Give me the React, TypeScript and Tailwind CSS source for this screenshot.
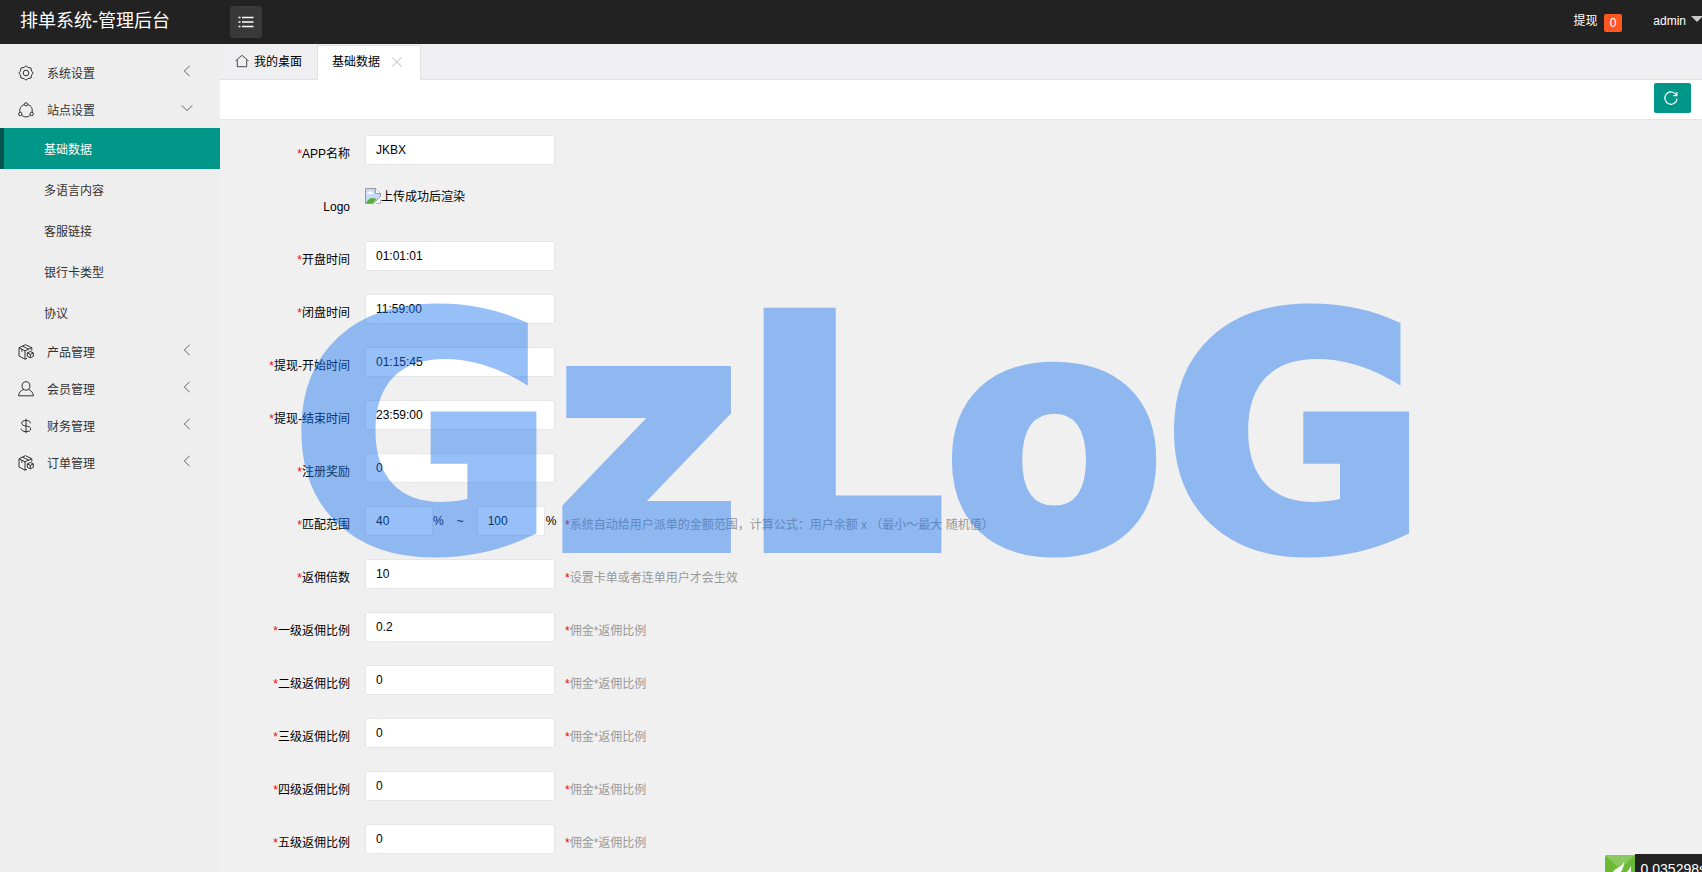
import React from 'react';

type IconProps = { className?: string };

const Svg = ({ className, children }: { className?: string; children: React.ReactNode }) => (
  <svg
    viewBox="0 0 16 16"
    fill="none"
    stroke="currentColor"
    strokeWidth={1}
    className={className}
    aria-hidden="true"
  >
    {children}
  </svg>
);

const GearIcon = ({ className }: IconProps) => (
  <Svg className={className}>
    <path d="M6.4 2.1Q8-.4 9.6 2.1L11 2.7Q13.9 2.1 13.3 5L13.9 6.4Q16.4 8 13.9 9.6L13.3 11Q13.9 13.9 11 13.3L9.6 13.9Q8 16.4 6.4 13.9L5 13.3Q2.1 13.9 2.7 11L2.1 9.6Q-.4 8 2.1 6.4L2.7 5Q2.1 2.1 5 2.7Z" strokeLinejoin="round" />
    <circle cx="8" cy="8" r="2.8" />
  </Svg>
);

const ShareIcon = ({ className }: IconProps) => (
  <Svg className={className}>
    <circle cx="8" cy="2.3" r="1.6" />
    <circle cx="2.3" cy="12" r="1.7" />
    <circle cx="13.7" cy="12" r="1.7" />
    <path d="M6.3 2.6C2.6 3.6 1.1 7 2 10.3M9.7 2.6c3.7 1 5.2 4.4 4.3 7.7M3.7 13.2c2.4 2.3 6.2 2.3 8.6 0" />
  </Svg>
);

const BoxIcon = ({ className }: IconProps) => (
  <Svg className={className}>
    <path d="M9 14.3l-2 .9L1 12V3.7L7.5.7l6.3 3v3M1 3.7l6 3.1 6.8-3.1M7 6.8v8.4M3.8 5.3v2.5M4.5 2.2l6.3 3" strokeLinejoin="round" />
    <path d="M12.3 7.5l3 1.4v3.4l-3 1.5-3-1.5V8.9zM9.3 8.9l3 1.5 3-1.5M12.3 10.4v3.4" strokeLinejoin="round" />
  </Svg>
);

const UserIcon = ({ className }: IconProps) => (
  <Svg className={className}>
    <ellipse cx="8" cy="4.9" rx="3.9" ry="4.2" />
    <path d="M5.7 8.4C2.7 9.4.7 11.8.6 14.8h14.8c-.1-3-2.1-5.4-5.1-6.4" strokeLinejoin="round" />
  </Svg>
);

const DollarIcon = ({ className }: IconProps) => (
  <Svg className={className}>
    <path d="M12.5 5.3C12.3 3.4 10.7 2.5 8 2.5S3.7 3.5 3.7 5.2 5.2 7.6 8 8s4.7 1.1 4.7 2.9S11 13.6 8 13.6s-4.7-1.1-4.8-3M8 .8v14.4" />
  </Svg>
);

const HomeIcon = ({ className }: IconProps) => (
  <Svg className={className}>
    <path d="M.6 7.8L8 1.5l7.4 6.3M2.6 6.5v8h10.8v-8" strokeLinejoin="round" />
  </Svg>
);

const ChevronIcon = ({ open }: { open: boolean }) => (
  <Svg className="mb-[6px] h-3 w-3">
    {open ? <path d="M1 4.5l7 7 7-7" /> : <path d="M11.5 1l-7 7 7 7" />}
  </Svg>
);

// Placeholder glyph shown in place of an image that has not been uploaded
const BrokenImageIcon = () => (
  <svg viewBox="0 0 16 16" className="h-4 w-4 shrink-0" aria-hidden="true">
    <path d="M.5 15.5V.5h10l5 5v3l-7 7z" fill="#c7d9f7" stroke="#9b9b9b" />
    <path d="M2 6c0-1.5 1-2 2-1.8C4.5 2.8 6.8 3 7 4.5c1 0 1.5.7 1.3 1.5z" fill="#fff" />
    <path d="M1 15c1.5-3 4-5 7-5 1.5 0 2.5.5 3 1.5L8 15z" fill="#57ab37" />
    <path d="M10.5.5v5h5" fill="#fff" stroke="#9b9b9b" />
    <path d="M8.5 16l7.5-7v7z" fill="#fff" />
    <path d="M11.5 15.5h4v-4" fill="none" stroke="#b5b5b5" />
  </svg>
);

const menu = [
  { label: '系统设置', icon: GearIcon },
  {
    label: '站点设置',
    icon: ShareIcon,
    children: ['基础数据', '多语言内容', '客服链接', '银行卡类型', '协议'],
  },
  { label: '产品管理', icon: BoxIcon },
  { label: '会员管理', icon: UserIcon },
  { label: '财务管理', icon: DollarIcon },
  { label: '订单管理', icon: BoxIcon },
];

const inputClass = 'h-[30px] rounded-[2px] border border-[#e6e6e6] bg-white pl-[10px] text-xs text-black outline-none';

const Row = ({ label, htmlFor, required = true, hint, children }: {
  label: string;
  htmlFor?: string;
  required?: boolean;
  hint?: string;
  children: React.ReactNode;
}) => (
  <div className="mb-[15px] flex h-[38px] items-start">
    <label htmlFor={htmlFor} className="w-[145px] shrink-0 py-[9px] pr-[15px] text-right leading-5">
      {required && <span className="text-[#f00]">*</span>}
      {label}
    </label>
    <div className="flex w-[190px] shrink-0 items-center whitespace-nowrap">{children}</div>
    {hint && (
      <p className="ml-[10px] py-[9px] leading-5 whitespace-nowrap text-[#999]">
        <span className="text-[#f00]">*</span>
        {hint}
      </p>
    )}
  </div>
);

const TextRow = ({ id, label, value, hint }: { id: string; label: string; value: string; hint?: string }) => (
  <Row label={label} htmlFor={id} hint={hint}>
    <input id={id} type="text" defaultValue={value} className={`${inputClass} w-full`} />
  </Row>
);

const Header = () => (
  <header className="flex h-11 shrink-0 items-center bg-[#222] text-white">
    <h1 className="w-[230px] shrink-0 pb-[2px] pl-5 text-lg">排单系统-管理后台</h1>
    <button type="button" aria-label="菜单" className="flex h-8 w-8 items-center justify-center rounded-[3px] bg-[#393939]">
      <Svg className="h-4 w-4">
        <path d="M.5 3.5h2M4 3.5h11.5M.5 8h2M4 8h11.5M.5 12.5h2M4 12.5h11.5" strokeWidth={1.3} />
      </Svg>
    </button>
    <div className="-mr-px ml-auto flex items-center pb-[2px]">
      <a href="#withdraw" className="flex items-center gap-[6px]">
        提现
        <span className="mt-1 h-[18px] rounded-[2px] bg-[#ff5722] px-[6px] leading-[18px]">0</span>
      </a>
      <a href="#admin" className="ml-[31px] flex items-center gap-[5px]">
        admin
        <span className="mb-1 border-x-[6px] border-t-[6px] border-x-transparent border-t-[#c8c8c8]" />
      </a>
    </div>
  </header>
);

const Sidebar = () => (
  <nav className="w-[220px] shrink-0 bg-[#eee] pt-[10px] text-[#333]">
    {menu.map(({ label, icon: Icon, children }) => (
      <div key={label}>
        <a href="#menu" className="flex h-[37px] items-center pt-[2px] pr-[27px] pl-[18px]">
          <Icon className="mb-px h-4 w-4" />
          <span className="ml-[13px] flex-1">{label}</span>
          <ChevronIcon open={!!children} />
        </a>
        {children?.map((child, i) => (
          <a
            key={child}
            href="#page"
            className={`flex h-[41px] items-center border-l-4 pt-[2px] pl-10 ${i === 0 ? 'border-[#04564e] bg-[#009688] text-white' : 'border-transparent'}`}
          >
            {child}
          </a>
        ))}
      </div>
    ))}
  </nav>
);

const Tabs = () => (
  <div className="flex h-9 shrink-0 border-b border-[#e2e2e2] bg-[#efeef0]">
    <button type="button" className="flex w-[97px] items-center gap-[5px] pl-[15px]">
      <HomeIcon className="mb-[2px] h-[14px] w-[14px] text-[#333]" />
      我的桌面
    </button>
    <div className="mt-px -mb-px flex w-[104px] items-center border-x border-t border-[#e2e2e2] bg-white pb-[2px] pl-[14px]">
      <button type="button">基础数据</button>
      <button type="button" aria-label="关闭" className="ml-[11px] text-[#c2c2c2]">
        <Svg className="h-3 w-3">
          <path d="M2 2l12 12M14 2L2 14" strokeWidth={1.4} />
        </Svg>
      </button>
    </div>
  </div>
);

const commission = '佣金*返佣比例';

export default function App() {
  return (
    <div className="relative flex h-screen flex-col overflow-hidden bg-[#f0f0f0] font-['Liberation_Sans','Noto_Sans_CJK_SC',sans-serif] text-xs text-black">
      <Header />
      <div className="flex min-h-0 flex-1">
        <Sidebar />
        <main className="flex min-w-0 flex-1 flex-col">
          <Tabs />
          <div className="flex h-10 shrink-0 items-start justify-end border-b border-[#e5e5e5] bg-white pt-[3px] pr-[11px]">
            <button type="button" aria-label="刷新" className="flex h-[30px] w-[37px] items-center rounded-[2px] bg-[#009688] pl-[10px] text-white">
              <Svg className="h-[14px] w-[14px]">
                <path d="M14 4.5A7 7 0 1 0 15 8.5M14.7 1v4.2h-4.3" strokeWidth={1.4} />
              </Svg>
            </button>
          </div>
          <form className="min-h-0 flex-1 pt-[15px]">
            <TextRow id="name" label="APP名称" value="JKBX" />
            <Row label="Logo" required={false}>
              <div className="flex items-start">
                <BrokenImageIcon />
                <span className="pt-px">上传成功后渲染</span>
              </div>
            </Row>
            <TextRow id="open" label="开盘时间" value="01:01:01" />
            <TextRow id="close" label="闭盘时间" value="11:59:00" />
            <TextRow id="cash-start" label="提现-开始时间" value="01:15:45" />
            <TextRow id="cash-end" label="提现-结束时间" value="23:59:00" />
            <TextRow id="reward" label="注册奖励" value="0" />
            <Row
              label="匹配范围"
              htmlFor="min"
              hint="系统自动给用户派单的金额范围，计算公式：用户余额 x （最小～最大 随机值）"
            >
              <input id="min" type="text" defaultValue="40" className={`${inputClass} w-[68px] shrink-0`} />
              <span>%</span>
              <span className="mx-[13px]">~</span>
              <input aria-label="最大" type="text" defaultValue="100" className={`${inputClass} w-[68px] shrink-0`} />
              <span className="ml-px">%</span>
            </Row>
            <TextRow id="times" label="返佣倍数" value="10" hint="设置卡单或者连单用户才会生效" />
            <TextRow id="level1" label="一级返佣比例" value="0.2" hint={commission} />
            <TextRow id="level2" label="二级返佣比例" value="0" hint={commission} />
            <TextRow id="level3" label="三级返佣比例" value="0" hint={commission} />
            <TextRow id="level4" label="四级返佣比例" value="0" hint={commission} />
            <TextRow id="level5" label="五级返佣比例" value="0" hint={commission} />
          </form>
        </main>
      </div>

      {/* Watermark over the page */}
      <div className="pointer-events-none absolute inset-0 flex items-center justify-center pl-4 font-['DejaVu_Sans',sans-serif] text-[320px] leading-none font-bold text-[#1b73f0] opacity-45 [-webkit-text-stroke:12px_#1b73f0]">
        GzLoG
      </div>

      {/* Page trace badge */}
      <div className="absolute -right-[10px] -bottom-3 flex h-[30px] text-sm leading-[30px] text-white">
        <svg viewBox="0 0 30 30" className="h-[30px] w-[30px]" aria-hidden="true">
          <rect y="1" width="34" height="29" rx="3" fill="#6cb935" />
          <path d="M0 1h30L15 15z" fill="#8bc860" />
          <path d="M19 5c1 5-3 7-8 10-4 2.5-6 7-5 13 6-8 14-9 13-23zM25 11c1 6-5 7-9 12-1 2-1 4-1 6 6-3 14-8 10-18z" fill="#fff" />
        </svg>
        <span className="bg-[#232323] px-[6px]">0.035298s</span>
      </div>
    </div>
  );
}
